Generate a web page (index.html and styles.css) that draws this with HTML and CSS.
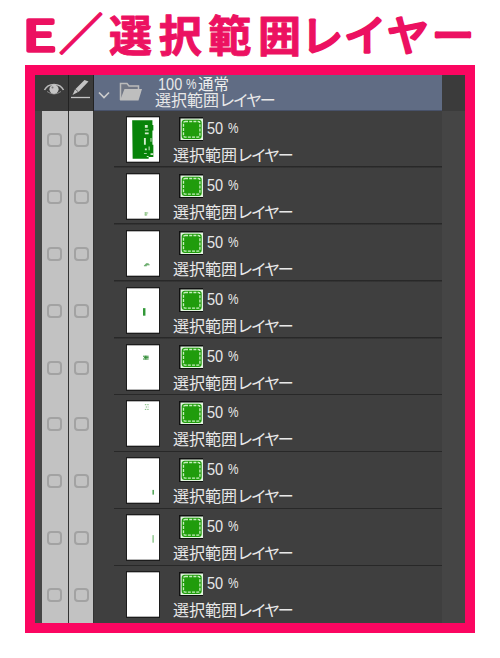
FILE: index.html
```html
<!DOCTYPE html>
<html lang="ja">
<head>
<meta charset="utf-8">
<title>選択範囲レイヤー</title>
<link rel="stylesheet" href="styles.css">
</head>
<body>
<svg class="defs" width="0" height="0">
  <symbol id="swatch" viewBox="0 0 24 24">
    <rect width="24" height="24" fill="#111"/>
    <rect x="1.5" y="1.5" width="22.5" height="21.5" fill="#e2f6df"/>
    <rect x="2.7" y="2.7" width="20" height="19.2" rx="3" fill="#209c0c"/>
    <rect x="4.5" y="4.5" width="16.4" height="15.6" rx="1.5" fill="none" stroke="#c5efbd" stroke-width="1.3" stroke-dasharray="3 1.2"/>
  </symbol>
</svg>
<h1 class="title"><svg width="500" height="65" viewBox="0 0 500 65">
  <text class="e" x="23" y="50.500" textLength="33" lengthAdjust="spacingAndGlyphs">E</text>
  <text class="slash" x="59" y="50">／</text>
  <text class="kanji" x="109" y="51.500" textLength="192">選択範囲</text>
  <text class="kana" x="301" y="50.500">レ</text>
  <text class="kana" x="344" y="50.500">イ</text>
  <text class="kana" x="387" y="50.500">ヤ</text>
  <text class="kana" x="432" y="50.500">ー</text>
</svg></h1>
<main class="panel">
  <header class="group">
    <div class="tool"><svg width="22" height="16" viewBox="0 0 22 16"><path d="M1.500 9C5 1.500 17 1.500 20.500 9" fill="none" stroke="#bbb" stroke-width="1.500"/><path d="M4 10.500Q11 15.500 18 10.500" fill="none" stroke="#888" stroke-width="1"/><circle cx="11" cy="8.300" r="4.600" fill="#c4c4c4"/><circle cx="9.500" cy="6.500" r="1" fill="#777"/></svg></div>
    <div class="tool pen"><svg width="22" height="22" viewBox="0 0 22 22"><path d="M2.500 17L5 11.500L14.500 2L18.500 3.500L9 13.500Z" fill="#c4c4c4"/><path d="M5 11L8.500 14" stroke="#444" stroke-width=".7"/><path d="M1 19.500H20" stroke="#c4c4c4" stroke-width="1.300"/></svg></div>
    <div class="folder">
      <svg class="chev" width="12" height="8" viewBox="0 0 12 8"><path d="M1 1.500L6 6.500L11 1.500" fill="none" stroke="#ccc" stroke-width="1.700"/></svg>
      <svg class="dir" width="24" height="20" viewBox="0 0 24 20"><path d="M1.500 18V1.500H8L10 4H19.500V7" fill="#707684" stroke="#bbb" stroke-width="1.500"/><path d="M5.500 7H23L19.500 18.500H1Z" fill="#bebebe"/></svg>
      <div class="label"><div class="mode"><span class="pct"><b>100</b><em>%</em></span>通常</div><div class="name">選択範囲<span>レイヤー</span></div></div>
    </div>
  </header>
  <div class="layers">
    <section class="row"><div class="cell"><i></i></div><div class="cell"><i></i></div><div class="layer">
      <svg class="thumb" viewBox="0 0 34 47"><rect width="34" height="47" fill="#fff"/><path d="M5.500 3H27V8H28V14H27V29H28V42H23V44H6Z" fill="#078309"/><path d="M19 8h3v3h-3zM19 13h4v1h-4zM19 16h4v2h-4zM18 22h2v7h-2zM25 22h1v4h-1zM19 33h2v2h-2zM23 31h1v4h-1zM18 38h3v1h-3zM25 38h3v2h-3zM21 41h2v1h-2z" fill="#d5edcf"/></svg>
      <div class="info"><div class="opacity"><svg><use href="#swatch"/></svg><span class="pct"><b>50</b><em>%</em></span></div><div class="name">選択範囲<span>レイヤー</span></div></div></div></section>
    <section class="row"><div class="cell"><i></i></div><div class="cell"><i></i></div><div class="layer">
      <svg class="thumb" viewBox="0 0 34 47"><rect width="34" height="47" fill="#fff"/><path d="M18.500 41h4M18.500 43h3M20 40v4" stroke="#83bd7b" fill="none"/></svg>
      <div class="info"><div class="opacity"><svg><use href="#swatch"/></svg><span class="pct"><b>50</b><em>%</em></span></div><div class="name">選択範囲<span>レイヤー</span></div></div></div></section>
    <section class="row"><div class="cell"><i></i></div><div class="cell"><i></i></div><div class="layer">
      <svg class="thumb" viewBox="0 0 34 47"><rect width="34" height="47" fill="#fff"/><path d="M18 36.500h3M19 35.500h5M20 34.500h3" stroke="#459847" fill="none"/></svg>
      <div class="info"><div class="opacity"><svg><use href="#swatch"/></svg><span class="pct"><b>50</b><em>%</em></span></div><div class="name">選択範囲<span>レイヤー</span></div></div></div></section>
    <section class="row"><div class="cell"><i></i></div><div class="cell"><i></i></div><div class="layer">
      <svg class="thumb" viewBox="0 0 34 47"><rect width="34" height="47" fill="#fff"/><rect x="17" y="21" width="2.600" height="8" fill="#329838"/></svg>
      <div class="info"><div class="opacity"><svg><use href="#swatch"/></svg><span class="pct"><b>50</b><em>%</em></span></div><div class="name">選択範囲<span>レイヤー</span></div></div></div></section>
    <section class="row"><div class="cell"><i></i></div><div class="cell"><i></i></div><div class="layer">
      <svg class="thumb" viewBox="0 0 34 47"><rect width="34" height="47" fill="#fff"/><path d="M17 11.500h6M18 13h5M17 14.500h6M20 11v4" stroke="#28862d" fill="none"/></svg>
      <div class="info"><div class="opacity"><svg><use href="#swatch"/></svg><span class="pct"><b>50</b><em>%</em></span></div><div class="name">選択範囲<span>レイヤー</span></div></div></div></section>
    <section class="row"><div class="cell"><i></i></div><div class="cell"><i></i></div><div class="layer">
      <svg class="thumb" viewBox="0 0 34 47"><rect width="34" height="47" fill="#fff"/><path d="M19 3.500h4M20 6h3M19 8.500h4" stroke="#78b876" stroke-dasharray="1.500 1" fill="none"/></svg>
      <div class="info"><div class="opacity"><svg><use href="#swatch"/></svg><span class="pct"><b>50</b><em>%</em></span></div><div class="name">選択範囲<span>レイヤー</span></div></div></div></section>
    <section class="row"><div class="cell"><i></i></div><div class="cell"><i></i></div><div class="layer">
      <svg class="thumb" viewBox="0 0 34 47"><rect width="34" height="47" fill="#fff"/><rect x="27" y="33.500" width="1.700" height="5" fill="#59a85e"/></svg>
      <div class="info"><div class="opacity"><svg><use href="#swatch"/></svg><span class="pct"><b>50</b><em>%</em></span></div><div class="name">選択範囲<span>レイヤー</span></div></div></div></section>
    <section class="row"><div class="cell"><i></i></div><div class="cell"><i></i></div><div class="layer">
      <svg class="thumb" viewBox="0 0 34 47"><rect width="34" height="47" fill="#fff"/><rect x="27" y="21" width="1.500" height="8" fill="#8bc58a"/></svg>
      <div class="info"><div class="opacity"><svg><use href="#swatch"/></svg><span class="pct"><b>50</b><em>%</em></span></div><div class="name">選択範囲<span>レイヤー</span></div></div></div></section>
    <section class="row"><div class="cell"><i></i></div><div class="cell"><i></i></div><div class="layer">
      <svg class="thumb" viewBox="0 0 34 47"><rect width="34" height="47" fill="#fff"/></svg>
      <div class="info"><div class="opacity"><svg><use href="#swatch"/></svg><span class="pct"><b>50</b><em>%</em></span></div><div class="name">選択範囲<span>レイヤー</span></div></div></div></section>
  </div>
</main>
</body>
</html>
```
FILE: styles.css
```css
* { box-sizing: border-box; }
body {
  margin: 0;
  width: 500px;
  height: 658px;
  overflow: hidden;
  background: #fff;
  font-family: "Noto Sans CJK JP", "Liberation Sans", sans-serif;
}
svg { display: block; flex: none; }
.defs { display: none; }
.title { margin: 0; height: 65px; font-weight: 400; }
.title svg { overflow: visible; }
.title text {
  fill: #ec1161;
  stroke: #ec1161;
  stroke-linejoin: round;
  stroke-linecap: round;
}
.title .e { font-size: 42px; stroke-width: 3.500px; }
.title .slash { font-size: 44px; stroke-width: 2px; }
.title .kanji { font-size: 43px; font-weight: 700; stroke-width: 1px; }
.title .kana { font-size: 42px; stroke-width: 3px; }
.panel {
  width: 450px;
  height: 568px;
  margin-left: 25px;
  border: 10px solid #fb0661;
  background: #454545;
  display: flex;
  flex-direction: column;
}
.group { display: flex; height: 36px; flex: none; padding: 0 23px 0 7px; background: #3b3b3b; }
.tool { width: 27px; padding: 6px 0 0 1px; border-right: 1px solid #222; }
.tool.pen { width: 25px; padding-top: 3px; }
.folder { flex: 1; display: flex; background: #606c84; border-bottom: 1px solid #48526a; }
.chev { margin: 16px 0 0 4px; }
.dir { margin: 7px 0 0 9px; }
.label { margin-left: 12px; color: #eee; font-size: 15.500px; }
.mode { height: 16px; line-height: 16px; margin-left: 3px; white-space: nowrap; display: flex; }
.label .pct { width: 40px; }
.label .pct b { width: 28px; }
.label .name { line-height: 16px; }
.name { font-size: 16px; white-space: nowrap; color: #e8e8e8; }
.name span { letter-spacing: -2.300px; }
.pct { display: flex; font: 16.500px "Liberation Sans", sans-serif; color: #e8e8e8; }
.pct b { width: 21px; font-weight: 400; transform: scaleX(.88); transform-origin: 0 0; }
.pct em { width: 10px; font-style: normal; font-size: 15.500px; transform: scaleX(.76); transform-origin: 0 0; }
.layers { flex: 1; display: grid; grid-template-rows: repeat(9, 1fr); }
.row { display: flex; padding: 0 23px 0 7px; min-height: 0; }
.cell { width: 27px; background: #c2c2c2; border-right: 1px solid #333; padding: 22px 0 0 5px; }
.cell + .cell { width: 25px; }
.cell i { display: block; width: 15px; height: 14px; border: 2px solid #a2a2a2; border-radius: 4px; }
.layer {
  flex: 1;
  display: flex;
  padding-left: 32px;
  background: linear-gradient(#282828, #282828) 20px 100% / 100% 1.500px no-repeat #3f3f3f;
}
.row:last-child .layer { background: #3f3f3f; }
.thumb { width: 34px; height: 47px; margin-top: 5px; border: 1px solid #1c1c1c; }
.info { margin-left: 13px; }
.opacity { display: flex; height: 31px; padding: 6px 0 0 6px; }
.opacity svg { width: 24px; height: 24px; }
.opacity .pct { margin-left: 4px; line-height: 22px; }
.info .name { line-height: 25px; }
```
